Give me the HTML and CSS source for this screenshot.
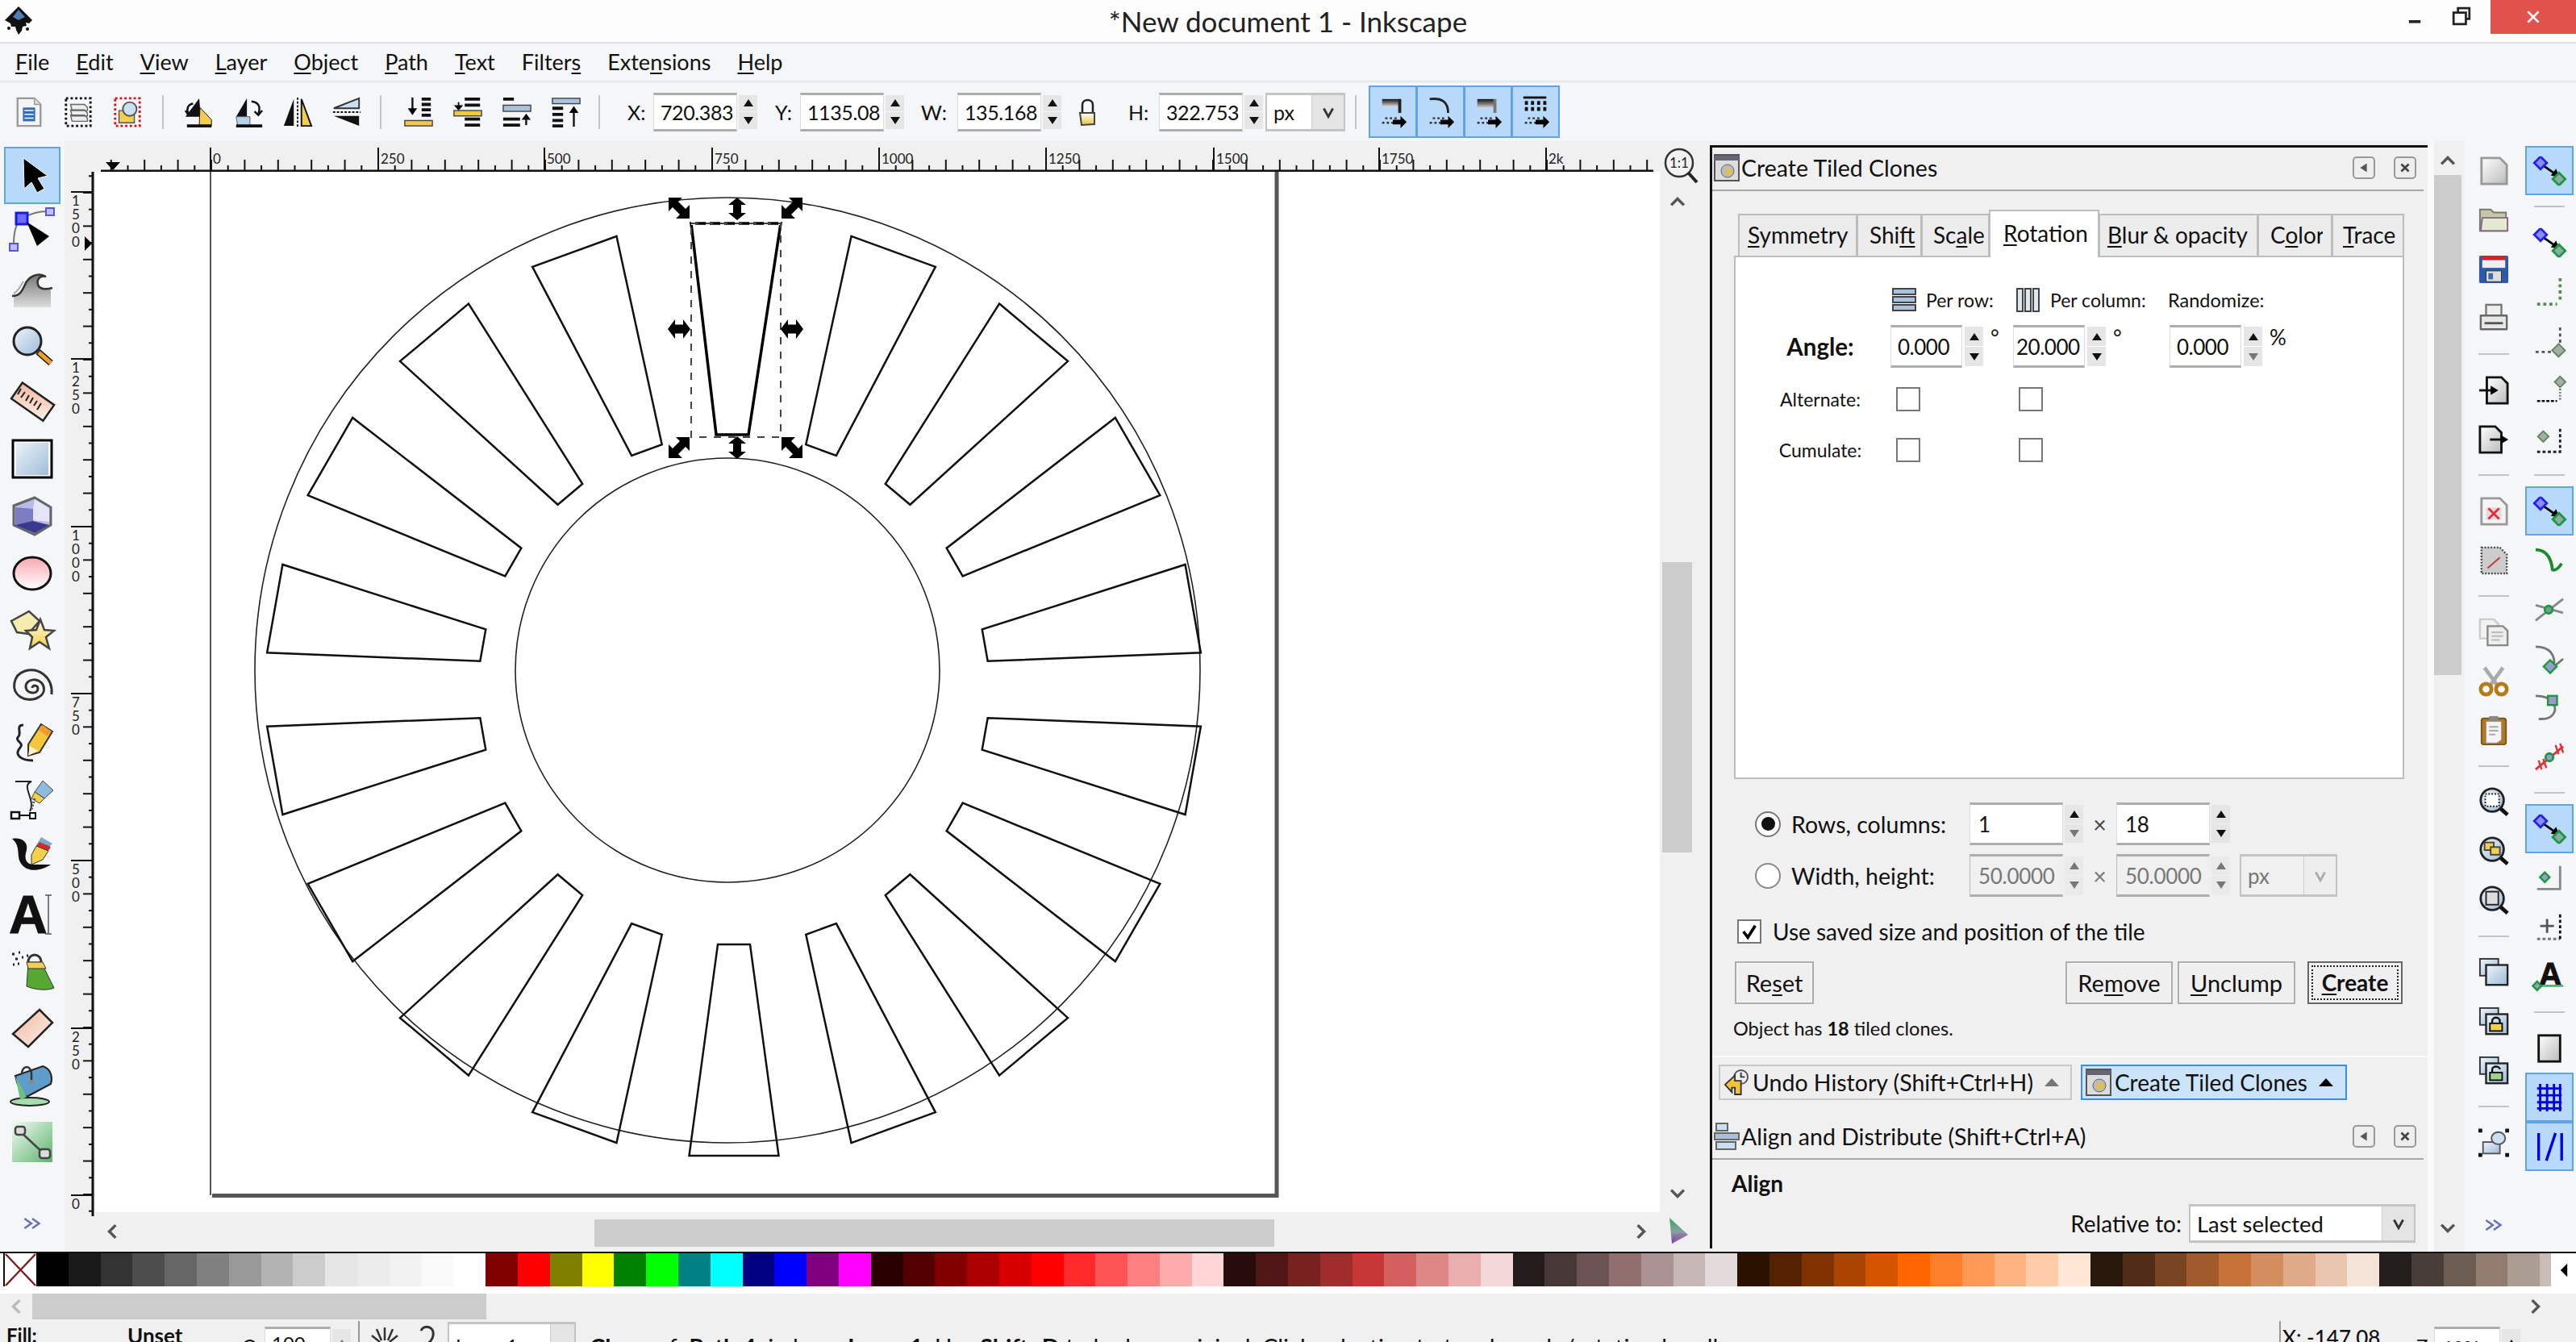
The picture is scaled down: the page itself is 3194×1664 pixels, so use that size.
FILE: index.html
```html
<!DOCTYPE html>
<html lang="en">
<head>
<meta charset="utf-8">
<title>New document 1 - Inkscape</title>
<link rel="stylesheet" href="styles.css">
</head>
<body>
<svg class="defs" aria-hidden="true">
<defs>
<linearGradient id="gBlue" x1="0" y1="0" x2="1" y2="1"><stop offset="0" stop-color="#eef4fa"/><stop offset="1" stop-color="#9dbbd8"/></linearGradient>
<linearGradient id="gPink" x1="0" y1="0" x2="0" y2="1"><stop offset="0" stop-color="#f8a8b0"/><stop offset="1" stop-color="#fff"/></linearGradient>
<linearGradient id="gYel" x1="0" y1="0" x2="0" y2="1"><stop offset="0" stop-color="#fffbd8"/><stop offset="1" stop-color="#f2cf50"/></linearGradient>
<linearGradient id="gPeach" x1="0" y1="0" x2="1" y2="1"><stop offset="0" stop-color="#f0b8a0"/><stop offset="1" stop-color="#fdf0ea"/></linearGradient>
<linearGradient id="gGray" x1="0" y1="0" x2="0" y2="1"><stop offset="0" stop-color="#777"/><stop offset="1" stop-color="#ddd"/></linearGradient>
<linearGradient id="gSheet" x1="0" y1="0" x2="1" y2="1"><stop offset="0" stop-color="#fff"/><stop offset="1" stop-color="#bbb"/></linearGradient>
<linearGradient id="gGreen" x1="0" y1="0" x2="1" y2="1"><stop offset="0" stop-color="#f4fbf4"/><stop offset="1" stop-color="#5cb36c"/></linearGradient>
<linearGradient id="gBar" x1="0" y1="0" x2="0" y2="1"><stop offset="0" stop-color="#111"/><stop offset="1" stop-color="#ddd"/></linearGradient>
<linearGradient id="gCms" x1="0" y1="0" x2="0" y2="1"><stop offset="0" stop-color="#2fa860"/><stop offset=".55" stop-color="#8aa0a0"/><stop offset="1" stop-color="#7030b8"/></linearGradient>
<linearGradient id="gLock" x1="0" y1="0" x2="0" y2="1"><stop offset="0" stop-color="#fff"/><stop offset="1" stop-color="#e8c43c"/></linearGradient>
<symbol id="snapN" viewBox="0 0 48 40"><path d="M12 10 36 27" stroke="#000" stroke-width="3"/><path d="M38 29 26 26 33 17Z"/><rect x="6" y="3" width="12" height="12" transform="rotate(45 12 9)" fill="#8c8cf0" stroke="#2222ee" stroke-width="3"/><rect x="31" y="25" width="12" height="12" transform="rotate(45 37 31)" fill="#8fa8a8" stroke="#179a3c" stroke-width="3"/></symbol>
<symbol id="mag" viewBox="0 0 40 40"><circle cx="18" cy="17" r="15" fill="url(#gBlue)" stroke="#222" stroke-width="3"/><path d="M29 28 38 36" stroke="#111" stroke-width="5"/></symbol>
<symbol id="stack" viewBox="0 0 40 40"><rect x="2" y="2" width="24" height="22" fill="url(#gBlue)" stroke="#333" stroke-width="2"/><rect x="10" y="10" width="28" height="26" fill="url(#gBlue)" stroke="#222" stroke-width="2.5"/></symbol>
<symbol id="snapArrow" viewBox="0 0 40 50"><path d="M10 33H26M6 39H22" stroke="#333" stroke-width="2.5" stroke-dasharray="3 3"/><path d="M20 35H30V30L38 38 30 46V41H20Z"/></symbol>
</defs>
</svg>

<div class="app">
  <header class="titlebar">
    <div class="tb-left">
      <svg class="logo" viewBox="0 0 36 36"><path d="M18 0 35 17 31 21 27 20 28 24 23 25 22 30 18 35 15 29 14 25 9 25 8 21 1 17Z" fill="#111"/><path d="M18 4 26 13 18 17 11 13Z" fill="#4d7fb8"/><circle cx="6" cy="27" r="2" fill="#111"/><circle cx="29" cy="28" r="2" fill="#111"/></svg>
    </div>
    <div class="doc-title">*New document 1 - Inkscape</div>
    <div class="win-ctl">
      <svg class="wc-min" viewBox="0 0 20 20"><path d="M4 14H16" stroke="#222" stroke-width="3"/></svg>
      <svg class="wc-max" viewBox="0 0 22 22"><path d="M7 6V2H20V14H16M2 7H16V20H2Z" fill="none" stroke="#222" stroke-width="2.5"/></svg>
      <div class="wc-close"><svg viewBox="0 0 20 20"><path d="M4 4 16 16M16 4 4 16" stroke="#fff" stroke-width="2.5"/></svg></div>
    </div>
  </header>

  <nav class="menubar">
    <span><u>F</u>ile</span><span><u>E</u>dit</span><span><u>V</u>iew</span><span><u>L</u>ayer</span><span><u>O</u>bject</span><span><u>P</u>ath</span><span><u>T</u>ext</span><span>Filter<u>s</u></span><span>Exte<u>n</u>sions</span><span><u>H</u>elp</span>
  </nav>

  <div class="toolbar">
    <span class="slot"><svg class="ti36" viewBox="0 0 36 40"><path d="M3 2H25L33 10V38H3Z" fill="#f4f4f4" stroke="#999" stroke-width="2.5"/><path d="M25 2V10H33" fill="#ddd" stroke="#999" stroke-width="1.5"/><path d="M10 14H26V32H10Z" fill="#2f6ebd"/><path d="M12 18H24M12 23H24M12 28H24" stroke="#fff" stroke-width="1.6"/></svg></span>
    <span class="slot"><svg class="ti36" viewBox="0 0 36 40"><rect x="2" y="2" width="32" height="36" fill="none" stroke="#111" stroke-width="3" stroke-dasharray="3 3"/><path d="M8 10H26L30 14V18H10ZM8 17H26L30 21V25H10ZM8 24H26L30 28V32H10Z" fill="#eee" stroke="#666" stroke-width="1.5"/></svg></span>
    <span class="slot"><svg class="ti36" viewBox="0 0 36 40"><rect x="2" y="2" width="32" height="36" fill="none" stroke="#d8121f" stroke-width="3" stroke-dasharray="3 3"/><path d="M7 18H27V34H7Z" fill="#f3cf4e" stroke="#555" stroke-width="1.5"/><circle cx="21" cy="16" r="9" fill="#c9dff2" stroke="#555" stroke-width="2"/></svg></span>
    <span class="tsep s28"></span>
    <span class="slot"><svg class="ti36" viewBox="0 0 40 40"><path d="M20 2 22 26 H2Z" fill="#111"/><path d="M21 14 L36 30V38H20Z" fill="#f3cd52" stroke="#111"/><path d="M4 38H36" stroke="#111" stroke-width="4"/><path d="M12 9C5 10 3 16 6 22M2 18 6 24 11 19" fill="none" stroke="#111" stroke-width="2.5"/></svg></span>
    <span class="slot"><svg class="ti36" viewBox="0 0 40 40"><path d="M18 2V26H4Z" fill="#111"/><path d="M4 26H22V38H6Z" fill="#b8d2ea" stroke="#555"/><path d="M4 38H38" stroke="#111" stroke-width="4"/><path d="M24 6C34 7 36 14 33 22M38 18 33 24 28 19" fill="none" stroke="#111" stroke-width="2.5"/></svg></span>
    <span class="slot"><svg class="ti36" viewBox="0 0 40 40"><path d="M15 3V38H2Z" fill="#111"/><path d="M25 3V38H38Z" fill="#f3cd52" stroke="#111" stroke-width="2"/><path d="M20 1V39" stroke="#111" stroke-dasharray="3 2" stroke-width="2"/></svg></span>
    <span class="slot"><svg class="ti36" viewBox="0 0 40 40"><path d="M36 2V15H3Z" fill="#c9dff2" stroke="#333" stroke-width="2"/><path d="M36 25V38L3 25Z" fill="#111"/><path d="M2 20H38" stroke="#111" stroke-dasharray="3 2" stroke-width="2"/></svg></span>
    <span class="tsep s24"></span>
    <span class="slot gapl"><svg class="ti36" viewBox="0 0 40 40"><path d="M12 1V19" stroke="#111" stroke-width="2.5"/><path d="M12 24 6 15H18Z"/><path d="M24 3H36M24 10H36M24 17H36M24 24H36" stroke="#111" stroke-width="4"/><rect x="2" y="31" width="36" height="7" fill="#f1c84c" stroke="#444" stroke-width="1.5"/></svg></span>
    <span class="slot"><svg class="ti36" viewBox="0 0 40 40"><path d="M16 3H36M16 11H36M16 29H36M16 37H36" stroke="#111" stroke-width="4"/><path d="M8 7V15" stroke="#111" stroke-width="2"/><path d="M8 18 2 11H14Z"/><rect x="2" y="18" width="36" height="7" fill="#f1c84c" stroke="#444" stroke-width="1.5"/></svg></span>
    <span class="slot"><svg class="ti36" viewBox="0 0 40 40"><path d="M2 3H16M2 29H24M2 37H24" stroke="#111" stroke-width="4"/><rect x="2" y="11" width="36" height="8" fill="#a9c3de" stroke="#444" stroke-width="1.5"/><path d="M32 22 26 30H38Z"/><path d="M32 28V37" stroke="#111" stroke-width="2.5"/></svg></span>
    <span class="slot"><svg class="ti36" viewBox="0 0 40 40"><rect x="2" y="2" width="36" height="7" fill="#a9c3de" stroke="#444" stroke-width="1.5"/><path d="M2 15H16M2 23H16M2 31H16M2 38H16" stroke="#111" stroke-width="4"/><path d="M30 12 24 21H36Z"/><path d="M30 20V39" stroke="#111" stroke-width="2.5"/></svg></span>
    <span class="tsep s22"></span>
    <span class="lbl lx">X:</span>
    <span class="spin tspin"><span class="entry">720.383</span><span class="updown"><i class="up"></i><i class="dn"></i></span></span>
    <span class="lbl ly">Y:</span>
    <span class="spin tspin"><span class="entry">1135.08</span><span class="updown"><i class="up"></i><i class="dn"></i></span></span>
    <span class="lbl lw">W:</span>
    <span class="spin tspin"><span class="entry">135.168</span><span class="updown"><i class="up"></i><i class="dn"></i></span></span>
    <span class="lockslot"><svg class="lock" viewBox="0 0 26 36"><path d="M7 20V9C7 1 20 1 20 9V18" fill="none" stroke="#222" stroke-width="2.5"/><path d="M4 19H22V33L6 34Z" fill="url(#gLock)" stroke="#444" stroke-width="2"/></svg></span>
    <span class="lbl lh">H:</span>
    <span class="spin tspin"><span class="entry">322.753</span><span class="updown"><i class="up"></i><i class="dn"></i></span></span>
    <span class="combo tcombo"><span class="ctext">px</span><span class="cbtn"><svg viewBox="0 0 16 16"><path d="M3 4 8 13 13 4" fill="none" stroke="#333" stroke-width="2.5"/></svg></span></span>
    <span class="tsep s26"></span>
    <span class="snapgroup">
      <span class="tbtn"><svg viewBox="0 0 40 50"><path d="M6 8H30V18H6Z" fill="url(#gBar)"/><path d="M27 8H31V26H27Z" fill="#222"/><use href="#snapArrow"/></svg></span>
      <span class="tbtn"><svg viewBox="0 0 40 50"><path d="M6 8C22 6 30 12 30 26" fill="none" stroke="#222" stroke-width="3"/><use href="#snapArrow"/></svg></span>
      <span class="tbtn"><svg viewBox="0 0 40 50"><path d="M6 8H30V20H6Z" fill="url(#gBar)"/><path d="M27 8H31V26H27Z" fill="#777"/><use href="#snapArrow"/></svg></span>
      <span class="tbtn"><svg viewBox="0 0 40 50"><path d="M4 6H34" stroke="#111" stroke-width="3"/><path d="M6 13H34M6 21H34" stroke="#111" stroke-width="5" stroke-dasharray="4 4"/><use href="#snapArrow"/></svg></span>
    </span>
  </div>

  <div class="main">
    <aside class="tools">
      <div class="tool on"><svg viewBox="0 0 54 54"><path d="M16 6 46 28 34 31 42 44 33 49 26 36 17 44Z" stroke="#fff"/></svg></div>
      <div class="tool"><svg viewBox="0 0 54 54"><path d="M4 42C4 28 6 16 14 10 24 4 36 1 46 1" fill="none" stroke="#777" stroke-width="2"/><rect x="7" y="3" width="14" height="14" fill="#6c6cff" stroke="#1a1aee" stroke-width="3"/><rect x="44" y="-3" width="10" height="9" fill="#c0c0ff" stroke="#5555ee" stroke-width="2"/><rect x="-1" y="41" width="10" height="9" fill="#c0c0ff" stroke="#5555ee" stroke-width="2"/><path d="M20 14 48 32 33 44Z"/></svg></div>
      <div class="tool"><svg viewBox="0 0 54 54"><path d="M4 50V36C12 36 14 30 18 22 22 12 34 6 44 12 38 10 32 14 34 22 36 28 44 28 50 26V50Z" fill="url(#gGray)"/><path d="M2 36C12 36 14 30 18 22 22 12 34 6 44 12 38 10 32 14 34 22 36 28 44 28 52 26" fill="none" stroke="#333" stroke-width="2.5"/><path d="M4 33C10 30 12 24 16 18" stroke="#aaa" fill="none" stroke-width="2"/></svg></div>
      <div class="tool"><svg viewBox="0 0 54 54"><path d="M34 34 50 48" stroke="#111" stroke-width="8"/><path d="M35 35 50 48" stroke="#f0a020" stroke-width="5"/><circle cx="21" cy="21" r="17" fill="url(#gBlue)" stroke="#222" stroke-width="3"/></svg></div>
      <div class="tool"><svg viewBox="0 0 54 54"><rect x="3" y="14" width="48" height="24" transform="rotate(35 27 27)" fill="url(#gPeach)" stroke="#222" stroke-width="2.5"/><path d="M13 10 9 17M18 14 13 21M23 18 19 25M28 21 24 28M33 25 29 31M38 28 33 36" stroke="#222" stroke-width="2"/></svg></div>
      <div class="tool"><svg viewBox="0 0 54 54"><rect x="5" y="4" width="44" height="44" fill="url(#gBlue)" stroke="#fff" stroke-width="4"/><rect x="3" y="3" width="48" height="46" fill="none" stroke="#000" stroke-width="3"/></svg></div>
      <div class="tool"><svg viewBox="0 0 54 54"><path d="M4 14 30 4 50 16V38L30 50 4 38Z" fill="#b9b9ea" stroke="#666" stroke-width="3"/><path d="M6 16 28 18V34L6 38Z" fill="#7c7cc0"/><path d="M28 18 30 6 48 17V34L28 32Z" fill="#e4e4fb"/><path d="M6 38 28 33 48 38 30 48Z" fill="#38388c"/></svg></div>
      <div class="tool"><svg viewBox="0 0 54 54"><ellipse cx="27" cy="27" rx="23" ry="20" fill="url(#gPink)" stroke="#111" stroke-width="3"/></svg></div>
      <div class="tool"><svg viewBox="0 0 54 54"><path d="M1 16 23 4 36 16 22 32 8 30Z" fill="#f7ecb0" stroke="#444" stroke-width="2.5"/><path d="M37 14 42 27 54 28 44 36 48 50 36 42 24 50 27 36 19 28 32 27Z" fill="url(#gYel)" stroke="#444" stroke-width="2.5"/></svg></div>
      <div class="tool"><svg viewBox="0 0 54 54"><path d="M27 28C27 24 34 24 34 29 34 36 20 36 19 27 18 16 37 14 41 26 45 40 24 47 12 39 0 31 3 12 18 7 34 2 53 14 51 36" fill="none" stroke="#333" stroke-width="3"/></svg></div>
      <div class="tool"><svg viewBox="0 0 54 54"><path d="M16 4C6 4 14 14 10 18 4 24 18 26 12 32 4 40 12 48 28 48" fill="none" stroke="#222" stroke-width="3"/><path d="M38 3 52 12 36 38 22 42 22 28Z" fill="#f4c63c" stroke="#333" stroke-width="2"/><path d="M22 42 24 30 34 36Z" fill="#fff3d0"/><path d="M40 4 51 12 46 18 35 10Z" fill="#ef9a2a"/></svg></div>
      <div class="tool"><svg viewBox="0 0 54 54"><path d="M6 3H26C12 8 32 26 24 40" fill="none" stroke="#222" stroke-width="2"/><rect x="1" y="41" width="10" height="8" fill="#fff" stroke="#111" stroke-width="2.5"/><rect x="24" y="42" width="7" height="7" fill="#fff" stroke="#111" stroke-width="2"/><path d="M11 45H24" stroke="#111" stroke-width="2"/><path d="M40 2 53 14 42 24 30 16Z" fill="#8dbbe0" stroke="#444"/><path d="M30 16 42 24 36 30 26 24Z" fill="#f3cf4e" stroke="#444"/><path d="M30 24 26 38" stroke="#555" stroke-width="3" stroke-dasharray="2 2"/></svg></div>
      <div class="tool"><svg viewBox="0 0 54 54"><path d="M2 4C14 2 22 8 20 18 16 30 20 36 30 36H50C38 44 22 46 14 36 6 26 14 14 2 4Z" fill="#111"/><path d="M38 2 52 10 44 18 32 12Z" fill="#7fa9cc"/><path d="M36 8 50 14 47 19 32 13Z" fill="#d02a2a"/><path d="M32 13 47 19 40 30 26 36 26 24Z" fill="#f3cf4e" stroke="#333"/></svg></div>
      <div class="tool"><svg viewBox="0 0 54 54"><text class="atext" x="-2" y="50">A</text><path d="M47 3V51M43 3H51M43 51H51" stroke="#555" stroke-width="1.5"/></svg></div>
      <div class="tool"><svg viewBox="0 0 54 54"><path d="M22 16C22 4 38 4 38 16" fill="none" stroke="#333" stroke-width="3"/><path d="M22 16H38L54 48C44 52 30 50 20 46Z" fill="#56a833" stroke="#333"/><path d="M20 16H40L44 24H22Z" fill="#f3cf4e" stroke="#333"/><path d="M2 6H5M10 4H12M14 10H16M6 12H9M3 19H5M9 18H11M20 8H22" stroke="#222" stroke-width="3"/></svg></div>
      <div class="tool"><svg viewBox="0 0 54 54"><path d="M36 4 52 20 22 50 3 34Z" fill="url(#gPeach)" stroke="#222" stroke-width="2.5"/></svg></div>
      <div class="tool"><svg viewBox="0 0 54 54"><ellipse cx="24" cy="48" rx="24" ry="5" fill="#a6dcae" stroke="#222" stroke-width="2"/><path d="M6 16 40 4C52 8 52 20 50 26L20 42C12 36 8 26 6 16Z" fill="#5f9cc9" stroke="#222" stroke-width="2"/><path d="M6 16 20 42 12 46Z" fill="#6fc07c"/><path d="M14 14C14 2 26 2 26 14V22" fill="none" stroke="#333" stroke-width="2.5"/><circle cx="26" cy="24" r="3" fill="#888"/></svg></div>
      <div class="tool"><svg viewBox="0 0 54 54"><rect x="2" y="2" width="50" height="50" fill="url(#gGreen)"/><path d="M12 14 42 42" stroke="#444" stroke-width="2.5"/><rect x="6" y="8" width="12" height="10" rx="3" fill="#ddd" stroke="#444" stroke-width="2.5"/><rect x="36" y="36" width="13" height="11" rx="3" fill="#ddd" stroke="#444" stroke-width="2.5"/></svg></div>
      <div class="more"><svg viewBox="0 0 20 14"><path d="M2 2 9 7 2 12M10 2 17 7 10 12" fill="none" stroke="#6a72b4" stroke-width="2.2"/></svg></div>
    </aside>

    <section class="canvas-area">
      <div class="corner"></div>
      <svg class="hruler" viewBox="118 175 1940 38">
        <defs><pattern id="hp" patternUnits="userSpaceOnUse" x="261" y="175" width="41.4" height="38"><path d="M1 23V36M21.7 30V36" stroke="#111" stroke-width="2"/></pattern></defs>
        <rect x="125" y="175" width="1925" height="38" fill="url(#hp)"/>
        <path d="M125 212H2050" stroke="#111" stroke-width="3"/>
        <path d="M261 183V212M469 183V212M675 183V212M883 183V212M1090 183V212M1297 183V212M1505 183V212M1710 183V212M1917 183V212" stroke="#111" stroke-width="2"/>
        <path d="M131 201H149L140 211Z"/>
        <g class="rtext"><text x="264" y="203">0</text><text x="472" y="203">250</text><text x="678" y="203">500</text><text x="886" y="203">750</text><text x="1093" y="203">1000</text><text x="1300" y="203">1250</text><text x="1508" y="203">1500</text><text x="1713" y="203">1750</text><text x="1920" y="203">2k</text></g>
      </svg>
      <div class="hfill"><svg class="one" viewBox="0 0 44 48"><circle cx="20" cy="20" r="17" fill="#f2f2f2" stroke="#333" stroke-width="2.5"/><text class="onetext" x="20" y="26">1:1</text><path d="M31 32 42 44" stroke="#222" stroke-width="4"/></svg></div>
      <svg class="vruler" viewBox="80 213 38 1295">
        <defs><pattern id="vp" patternUnits="userSpaceOnUse" x="80" y="238" width="38" height="41.4"><path d="M23 1H36M30 21.7H36" stroke="#111" stroke-width="2"/></pattern></defs>
        <rect x="80" y="213" width="38" height="1295" fill="url(#vp)"/>
        <path d="M115 213V1508" stroke="#111" stroke-width="3"/>
        <path d="M88 238H115M88 445H115M88 653H115M88 860H115M88 1067H115M88 1275H115M88 1482H115" stroke="#111" stroke-width="2"/>
        <path d="M105 293V311L114 302Z"/>
        <g class="rtext vt">
          <text><tspan x="94" y="255">1</tspan><tspan x="94" y="272">5</tspan><tspan x="94" y="289">0</tspan><tspan x="94" y="306">0</tspan></text>
          <text><tspan x="94" y="462">1</tspan><tspan x="94" y="479">2</tspan><tspan x="94" y="496">5</tspan><tspan x="94" y="513">0</tspan></text>
          <text><tspan x="94" y="670">1</tspan><tspan x="94" y="687">0</tspan><tspan x="94" y="704">0</tspan><tspan x="94" y="721">0</tspan></text>
          <text><tspan x="94" y="877">7</tspan><tspan x="94" y="894">5</tspan><tspan x="94" y="911">0</tspan></text>
          <text><tspan x="94" y="1084">5</tspan><tspan x="94" y="1101">0</tspan><tspan x="94" y="1118">0</tspan></text>
          <text><tspan x="94" y="1292">2</tspan><tspan x="94" y="1309">5</tspan><tspan x="94" y="1326">0</tspan></text>
          <text><tspan x="94" y="1499">0</tspan></text>
        </g>
      </svg>
      <svg class="canvas" viewBox="118 213 1940 1290">
        <defs><polygon id="tile" points="854.5,277 965.5,277 930,539 890,539"/></defs>
        <path d="M261 190V1482" stroke="#555" stroke-width="2" fill="none"/>
        <path d="M1583 190V1482.5H263" stroke="#555" stroke-width="5" fill="none"/>
        <circle cx="902" cy="831" r="586" class="thin"/>
        <circle cx="902" cy="831" r="263" class="thin"/>
        <g class="tiles">
          <use href="#tile" transform="rotate(20 910 855)"/><use href="#tile" transform="rotate(40 910 855)"/><use href="#tile" transform="rotate(60 910 855)"/><use href="#tile" transform="rotate(80 910 855)"/><use href="#tile" transform="rotate(100 910 855)"/><use href="#tile" transform="rotate(120 910 855)"/><use href="#tile" transform="rotate(140 910 855)"/><use href="#tile" transform="rotate(160 910 855)"/><use href="#tile" transform="rotate(180 910 855)"/><use href="#tile" transform="rotate(200 910 855)"/><use href="#tile" transform="rotate(220 910 855)"/><use href="#tile" transform="rotate(240 910 855)"/><use href="#tile" transform="rotate(260 910 855)"/><use href="#tile" transform="rotate(280 910 855)"/><use href="#tile" transform="rotate(300 910 855)"/><use href="#tile" transform="rotate(320 910 855)"/><use href="#tile" transform="rotate(340 910 855)"/>
        </g>
        <polygon class="seltile" points="857,277 968,277 928,539 888,539"/>
        <path class="bbtop" d="M857 277H968"/>
        <rect class="bbox" x="857" y="277" width="111" height="265"/>
        <defs>
          <path id="hNS" d="M0-14 11-5H5V5H11L0 14-11 5H-5V-5H-11Z"/>
          <path id="hDG" d="M-13-13H4L-1-8 8 1 13-4V13H-4L1 8-8-1-13 4Z"/>
        </defs>
        <use href="#hDG" transform="translate(842 258)"/>
        <use href="#hDG" transform="translate(982 258) scale(-1 1)"/>
        <use href="#hDG" transform="translate(842 555) scale(-1 1)"/>
        <use href="#hDG" transform="translate(982 555)"/>
        <use href="#hNS" transform="translate(914 259)"/>
        <use href="#hNS" transform="translate(914 555)"/>
        <use href="#hNS" transform="translate(842 408) rotate(90) scale(1.08 1)"/>
        <use href="#hNS" transform="translate(982 408) rotate(90) scale(1.08 1)"/>
      </svg>
      <div class="vscroll">
        <svg class="chev chev-up" viewBox="0 0 24 16"><path d="M3 13 12 4 21 13" /></svg>
        <div class="vthumb"></div>
        <svg class="chev chev-dn" viewBox="0 0 24 16"><path d="M3 3 12 12 21 3" /></svg>
      </div>
      <div class="hscroll">
        <svg class="chev chev-l" viewBox="0 0 16 24"><path d="M13 3 4 12 13 21"/></svg>
        <div class="hthumb"></div>
        <svg class="chev chev-r" viewBox="0 0 16 24"><path d="M3 3 12 12 3 21"/></svg>
      </div>
      <div class="cornerbr"><svg class="cms" viewBox="0 0 30 34"><path d="M5 1 28 22 8 33Z" fill="url(#gCms)"/><path d="M17 20 28 22 8 33Z" fill="#a070a0" opacity=".6"/></svg></div>
    </section>

    <section class="dock">
      <div class="dhead">
        <svg class="dicon" viewBox="0 0 32 34"><rect x="1" y="1" width="30" height="32" fill="#ddd" stroke="#555" stroke-width="2"/><path d="M1 2H31V8H1Z" fill="#667"/><circle cx="17" cy="21" r="8" fill="#bbb" stroke="#666"/><circle cx="18" cy="22" r="4" fill="#e8c040"/></svg>
        <span class="dtitle">Create Tiled Clones</span>
        <span class="dbtn"><svg viewBox="0 0 22 22"><path d="M15 5V17L6 11Z" fill="#555"/></svg></span>
        <span class="dbtn"><svg viewBox="0 0 22 22"><path d="M6 6 16 16M16 6 6 16" stroke="#444" stroke-width="3"/></svg></span>
      </div>

      <div class="notebook">
        <div class="tabs">
          <div class="tab w1"><span><u>S</u>ymmetry</span></div>
          <div class="tab w2"><span>Shi<u>f</u>t</span></div>
          <div class="tab w3"><span>Sc<u>a</u>le</span></div>
          <div class="tab w4 on"><span><u>R</u>otation</span></div>
          <div class="tab w5"><span><u>B</u>lur &amp; opacity</span></div>
          <div class="tab w6"><span>C<u>o</u>lor</span></div>
          <div class="tab w7"><span><u>T</u>race</span></div>
        </div>
        <div class="page">
          <div class="rotgrid">
            <div></div>
            <div class="hdr h2"><svg class="hic" viewBox="0 0 30 30"><rect x="1" y="1" width="28" height="7" fill="#a9c3de" stroke="#444" stroke-width="2"/><rect x="1" y="11" width="28" height="7" fill="#a9c3de" stroke="#444" stroke-width="2"/><rect x="1" y="21" width="28" height="7" fill="#a9c3de" stroke="#444" stroke-width="2"/></svg><span>Per row:</span></div>
            <div class="hdr h3"><svg class="hic" viewBox="0 0 30 30"><rect x="1" y="1" width="7" height="28" fill="#dde7f0" stroke="#444" stroke-width="2"/><rect x="11" y="1" width="7" height="28" fill="#dde7f0" stroke="#444" stroke-width="2"/><rect x="21" y="1" width="7" height="28" fill="#dde7f0" stroke="#444" stroke-width="2"/></svg><span>Per column:</span></div>
            <div class="hdr h4"><span>Randomize:</span></div>

            <div class="rlabel big"><b>Angle:</b></div>
            <div class="cell"><span class="spin pspin"><span class="entry">0.000</span><span class="updown"><i class="up"></i><i class="dn"></i></span></span><span class="unit">°</span></div>
            <div class="cell tight"><span class="spin pspin"><span class="entry">20.000</span><span class="updown"><i class="up"></i><i class="dn"></i></span></span><span class="unit">°</span></div>
            <div class="cell c4"><span class="spin pspin"><span class="entry">0.000</span><span class="updown"><i class="up"></i><i class="dn off"></i></span></span><span class="unit">%</span></div>

            <div class="rlabel">Alternate:</div>
            <div><span class="cb"></span></div>
            <div><span class="cb"></span></div>
            <div></div>

            <div class="rlabel">Cumulate:</div>
            <div><span class="cb"></span></div>
            <div><span class="cb"></span></div>
            <div></div>
          </div>
        </div>
      </div>

      <div class="sizerow first">
        <span class="radio sel"></span><span class="slabel">Rows, columns:</span>
        <span class="spin sspin"><span class="entry">1</span><span class="updown"><i class="up"></i><i class="dn off"></i></span></span>
        <span class="times">×</span>
        <span class="spin sspin"><span class="entry">18</span><span class="updown"><i class="up"></i><i class="dn"></i></span></span>
      </div>
      <div class="sizerow second dis">
        <span class="radio"></span><span class="slabel">Width, height:</span>
        <span class="spin sspin"><span class="entry">50.0000</span><span class="updown"><i class="up off"></i><i class="dn off"></i></span></span>
        <span class="times">×</span>
        <span class="spin sspin"><span class="entry">50.0000</span><span class="updown"><i class="up off"></i><i class="dn off"></i></span></span>
        <span class="combo scombo"><span class="ctext">px</span><span class="cbtn"><svg viewBox="0 0 16 16"><path d="M3 4 8 13 13 4" fill="none" stroke="#aaa" stroke-width="2.5"/></svg></span></span>
      </div>

      <div class="savedrow"><span class="cb on"><svg viewBox="0 0 24 24"><path d="M4 12 10 20 20 4" fill="none" stroke="#000" stroke-width="4"/></svg></span><span>Use saved size and position of the tile</span></div>

      <div class="btnrow">
        <button class="btn b1">Re<u>s</u>et</button>
        <button class="btn b2">Re<u>m</u>ove</button>
        <button class="btn b3"><u>U</u>nclump</button>
        <button class="btn b4"><span><u>C</u>reate</span></button>
      </div>
      <div class="status-note">Object has <b>18</b> tiled clones.</div>

      <div class="dtabs">
        <div class="dtab d1"><svg class="dti" viewBox="0 0 34 36"><circle cx="23" cy="11" r="9" fill="#eee" stroke="#555" stroke-width="2"/><path d="M23 5V11H28" fill="none" stroke="#333" stroke-width="2"/><path d="M2 21 15 9V16H23V34H15V25H11V31Z" fill="#f1c33c" stroke="#333" stroke-width="2"/></svg><span>Undo History (Shift+Ctrl+H)</span><i class="caret g"></i></div>
        <div class="dtab d2"><svg class="dti" viewBox="0 0 32 34"><rect x="1" y="1" width="30" height="32" fill="#ddd" stroke="#555" stroke-width="2"/><path d="M1 2H31V8H1Z" fill="#667"/><circle cx="17" cy="21" r="8" fill="#bbb" stroke="#666"/><circle cx="18" cy="22" r="4" fill="#e8c040"/></svg><span>Create Tiled Clones</span><i class="caret"></i></div>
      </div>

      <div class="dhead second">
        <svg class="dicon" viewBox="0 0 32 34"><rect x="3" y="1" width="14" height="9" fill="#c9dff2" stroke="#666" stroke-width="2"/><rect x="1" y="13" width="30" height="8" fill="#a9c3de" stroke="#666" stroke-width="2"/><rect x="3" y="24" width="24" height="9" fill="#c9dff2" stroke="#666" stroke-width="2"/></svg>
        <span class="dtitle">Align and Distribute (Shift+Ctrl+A)</span>
        <span class="dbtn"><svg viewBox="0 0 22 22"><path d="M15 5V17L6 11Z" fill="#555"/></svg></span>
        <span class="dbtn"><svg viewBox="0 0 22 22"><path d="M6 6 16 16M16 6 6 16" stroke="#444" stroke-width="3"/></svg></span>
      </div>
      <div class="aligntitle">Align</div>
      <div class="relrow"><span>Relative to:</span><span class="combo rcombo"><span class="ctext">Last selected</span><span class="cbtn"><svg viewBox="0 0 16 16"><path d="M3 4 8 13 13 4" fill="none" stroke="#333" stroke-width="2.5"/></svg></span></span></div>
    </section>

    <div class="dscroll">
      <svg class="chev chev-up u2" viewBox="0 0 24 16"><path d="M3 13 12 4 21 13"/></svg>
      <div class="dthumb"></div>
      <svg class="chev chev-dn d2c" viewBox="0 0 24 16"><path d="M3 3 12 12 21 3"/></svg>
    </div>

    <aside class="cmd">
      <div class="ccol">
        <div class="ci"><svg viewBox="0 0 40 40"><path d="M4 3H28L37 12V37H4Z" fill="url(#gSheet)" stroke="#999" stroke-width="3"/></svg></div>
        <div class="ci"><svg viewBox="0 0 40 40"><path d="M2 6H16L20 10H36V34H2Z" fill="#c4c9a4" stroke="#777" stroke-width="2"/><path d="M5 17H38V34H3Z" fill="#e6e9d2" stroke="#868" stroke-width="2"/></svg></div>
        <div class="ci"><svg viewBox="0 0 40 40"><rect x="1" y="2" width="38" height="36" rx="2" fill="#2c5aa8"/><path d="M5 3H35V8H5Z" fill="#d8202a"/><path d="M5 8H35V18H5Z" fill="#eee"/><rect x="10" y="22" width="20" height="14" fill="#ddd" stroke="#333"/><rect x="13" y="25" width="6" height="8" fill="#3a6aa8"/></svg></div>
        <div class="ci"><svg viewBox="0 0 40 40"><rect x="10" y="2" width="20" height="14" fill="#eee" stroke="#777" stroke-width="2.5"/><path d="M3 16H37V34H3Z" fill="#e8e8e8" stroke="#666" stroke-width="2.5" stroke-linejoin="round"/><path d="M8 26H32" stroke="#555" stroke-width="3"/></svg></div>
        <div class="csep"></div>
        <div class="ci"><svg viewBox="0 0 40 40"><path d="M11 3H30L38 11V37H11Z" fill="url(#gSheet)" stroke="#111" stroke-width="3"/><path d="M1 20H20" stroke="#111" stroke-width="3"/><path d="M16 14 26 20 16 26Z"/></svg></div>
        <div class="ci"><svg viewBox="0 0 40 40"><path d="M2 3H22L30 11V37H2Z" fill="url(#gSheet)" stroke="#111" stroke-width="3"/><path d="M15 20H32" stroke="#111" stroke-width="3"/><path d="M29 14 39 20 29 26Z"/></svg></div>
        <div class="csep"></div>
        <div class="ci"><svg viewBox="0 0 40 40"><path d="M4 3H28L37 12V37H4Z" fill="#f4f4f4" stroke="#999" stroke-width="3"/><rect x="10" y="15" width="20" height="16" fill="#ddd"/><path d="M13 16 27 30M27 16 13 30" stroke="#ee2a3a" stroke-width="3"/></svg></div>
        <div class="ci"><svg viewBox="0 0 40 40"><path d="M4 3H28L37 12V37H4Z" fill="#ccc" stroke="#444" stroke-width="2.5" stroke-dasharray="2 2"/><path d="M12 30 28 16" stroke="#c43a3a" stroke-width="2"/></svg></div>
        <div class="csep"></div>
        <div class="ci"><svg viewBox="0 0 40 40"><path d="M2 3H20L26 9V28H2Z" fill="#f2f2f2" stroke="#ccc" stroke-width="2.5"/><path d="M12 12H32L38 18V37H12Z" fill="#eee" stroke="#888" stroke-width="2.5"/><path d="M17 20H32M17 25H32M17 30H28" stroke="#bbb" stroke-width="2"/></svg></div>
        <div class="ci"><svg viewBox="0 0 40 40"><path d="M8 2 24 24M32 2 16 24" stroke="#aaa" stroke-width="5"/><circle cx="10" cy="30" r="7" fill="#fff" stroke="#b47a1e" stroke-width="5"/><circle cx="30" cy="30" r="7" fill="#fff" stroke="#b47a1e" stroke-width="5"/></svg></div>
        <div class="ci"><svg viewBox="0 0 40 40"><rect x="4" y="4" width="32" height="34" rx="3" fill="#b07a28" stroke="#7a5418" stroke-width="2"/><path d="M10 8H30V32L24 36H10Z" fill="#f4f4f4" stroke="#999"/><rect x="14" y="1" width="12" height="6" fill="#888"/><path d="M14 15H26M14 20H26M14 25H22" stroke="#aaa" stroke-width="2"/></svg></div>
        <div class="csep"></div>
        <div class="ci"><svg viewBox="0 0 40 40"><use href="#mag" width="40" height="40"/><rect x="9" y="9" width="18" height="16" fill="#fff" stroke="#222" stroke-width="2" stroke-dasharray="2 2"/></svg></div>
        <div class="ci"><svg viewBox="0 0 40 40"><use href="#mag" width="40" height="40"/><rect x="8" y="8" width="12" height="10" fill="#f3cf4e" stroke="#444" stroke-width="2"/><rect x="16" y="14" width="12" height="10" fill="#f3cf4e" stroke="#444" stroke-width="2"/></svg></div>
        <div class="ci"><svg viewBox="0 0 40 40"><use href="#mag" width="40" height="40"/><rect x="10" y="8" width="16" height="17" fill="#ddd" stroke="#222" stroke-width="2"/></svg></div>
        <div class="csep"></div>
        <div class="ci"><svg viewBox="0 0 40 40"><use href="#stack" width="40" height="40"/></svg></div>
        <div class="ci"><svg viewBox="0 0 40 40"><use href="#stack" width="40" height="40"/><path d="M18 22V19C18 13 28 13 28 19V22" fill="none" stroke="#111" stroke-width="2.5"/><rect x="15" y="22" width="16" height="10" fill="#f3cf4e" stroke="#111" stroke-width="2"/></svg></div>
        <div class="ci"><svg viewBox="0 0 40 40"><use href="#stack" width="40" height="40"/><path d="M18 22V18C18 13 28 13 28 18" fill="none" stroke="#111" stroke-width="2.5"/><rect x="15" y="22" width="16" height="10" fill="#9fd28c" stroke="#111" stroke-width="2"/></svg></div>
        <div class="csep"></div>
        <div class="ci"><svg viewBox="0 0 40 40"><rect x="6" y="19" width="22" height="15" fill="url(#gBlue)" stroke="#555" stroke-width="2"/><ellipse cx="26" cy="14" rx="9" ry="8" fill="#c9dff2" stroke="#555" stroke-width="2"/><path d="M0 4H5M35 4H40M0 36H5M35 36H40" stroke="#111" stroke-width="5"/></svg></div>
        <div class="more cmore"><svg viewBox="0 0 20 14"><path d="M2 2 9 7 2 12M10 2 17 7 10 12" fill="none" stroke="#6a72b4" stroke-width="2.2"/></svg></div>
      </div>
      <div class="ccol c2">
        <div class="ci on"><svg viewBox="0 0 48 40"><use href="#snapN"/></svg></div>
        <div class="csep"></div>
        <div class="ci"><svg viewBox="0 0 48 40"><use href="#snapN"/></svg></div>
        <div class="ci"><svg viewBox="0 0 40 40"><path d="M4 36H30M34 2V34" stroke="#5a8a5a" stroke-width="4" stroke-dasharray="4 4"/></svg></div>
        <div class="ci"><svg viewBox="0 0 40 40"><path d="M2 34H24M34 2V22" stroke="#555" stroke-width="3" stroke-dasharray="4 4"/><rect x="26" y="26" width="12" height="12" transform="rotate(45 32 32)" fill="#aaa" stroke="#5a8a5a" stroke-width="2"/></svg></div>
        <div class="ci"><svg viewBox="0 0 40 40"><path d="M4 34H30" stroke="#111" stroke-width="2.5" stroke-dasharray="4 2"/><path d="M34 18V34" stroke="#777" stroke-width="3" stroke-dasharray="2 2"/><rect x="29" y="4" width="10" height="10" transform="rotate(45 34 9)" fill="#aaa" stroke="#5a8a5a" stroke-width="2"/></svg></div>
        <div class="ci"><svg viewBox="0 0 40 40"><path d="M4 36H34V4" fill="none" stroke="#222" stroke-width="3" stroke-dasharray="4 3"/><rect x="7" y="11" width="10" height="10" transform="rotate(45 12 16)" fill="#aaa" stroke="#5a8a5a" stroke-width="2"/></svg></div>
        <div class="csep"></div>
        <div class="ci on"><svg viewBox="0 0 48 40"><use href="#snapN"/></svg></div>
        <div class="ci"><svg viewBox="0 0 40 40"><path d="M2 6C14 6 22 14 24 32 28 34 32 30 36 24" fill="none" stroke="#1b8a2e" stroke-width="4"/></svg></div>
        <div class="ci"><svg viewBox="0 0 40 40"><path d="M2 34 38 6M2 14 38 24" stroke="#888" stroke-width="3"/><circle cx="19" cy="20" r="5" fill="#7a9a9a" stroke="#179a3c" stroke-width="3"/></svg></div>
        <div class="ci"><svg viewBox="0 0 40 40"><path d="M2 4C20 4 28 14 26 30M26 30 38 20" fill="none" stroke="#777" stroke-width="3"/><rect x="15" y="24" width="12" height="12" transform="rotate(45 21 30)" fill="#9a9ad0" stroke="#179a3c" stroke-width="2.5"/></svg></div>
        <div class="ci"><svg viewBox="0 0 40 40"><path d="M2 4C12 4 22 6 26 16M26 16C30 24 24 36 6 34" fill="none" stroke="#777" stroke-width="3"/><rect x="18" y="4" width="12" height="12" fill="#9a9ad0" stroke="#179a3c" stroke-width="2.5"/></svg></div>
        <div class="ci"><svg viewBox="0 0 40 40"><path d="M2 36 38 6" stroke="#e0303a" stroke-width="3"/><path d="M6 24 10 36M12 22 16 34M28 4 32 16M34 2 38 14" stroke="#e0303a" stroke-width="2.5"/><circle cx="20" cy="20" r="5" fill="#9a9ad0" stroke="#179a3c" stroke-width="3"/></svg></div>
        <div class="csep"></div>
        <div class="ci on"><svg viewBox="0 0 48 40"><use href="#snapN"/></svg></div>
        <div class="ci"><svg viewBox="0 0 40 40"><path d="M4 34H34V4" fill="none" stroke="#888" stroke-width="3"/><rect x="10" y="14" width="9" height="9" transform="rotate(45 14 18)" fill="#9a9ad0" stroke="#179a3c" stroke-width="2.5"/></svg></div>
        <div class="ci"><svg viewBox="0 0 40 40"><path d="M4 35H34" stroke="#777" stroke-width="3" stroke-dasharray="4 3"/><path d="M34 3V35" stroke="#111" stroke-width="3" stroke-dasharray="4 3"/><path d="M8 18H26M17 9V27" stroke="#555" stroke-width="3"/></svg></div>
        <div class="ci"><svg viewBox="0 0 40 40"><text class="atext small" x="6" y="32">A</text><path d="M2 32H38" stroke="#4fb36a" stroke-width="3"/><rect x="0" y="28" width="8" height="8" transform="rotate(45 4 32)" fill="#9a9ad0" stroke="#179a3c" stroke-width="2.5"/></svg></div>
        <div class="csep"></div>
        <div class="ci"><svg viewBox="0 0 40 40"><rect x="6" y="3" width="28" height="34" fill="url(#gSheet)" stroke="#111" stroke-width="3"/></svg></div>
        <div class="ci on"><svg viewBox="0 0 40 40"><path d="M4 8H36M4 17H36M4 26H36M4 34H36M8 2V38M17 2V38M26 2V38M34 2V38" stroke="#0000e0" stroke-width="3"/></svg></div>
        <div class="ci on"><svg viewBox="0 0 40 40"><path d="M6 2V38M36 2V38M16 38 28 2" stroke="#0000e0" stroke-width="3.5"/></svg></div>
      </div>
    </aside>
  </div>

  <div class="palette">
    <div class="swatches">
    <span class="sw none"><svg viewBox="0 0 41 43" preserveAspectRatio="none"><path d="M1 1 40 42M40 1 1 42" stroke="#7c1c1c" stroke-width="2.5"/></svg></span>
    <span class="sw" style="background:#000"></span><span class="sw" style="background:#1a1a1a"></span><span class="sw" style="background:#333"></span><span class="sw" style="background:#4d4d4d"></span><span class="sw" style="background:#666"></span><span class="sw" style="background:#808080"></span><span class="sw" style="background:#999"></span><span class="sw" style="background:#b3b3b3"></span><span class="sw" style="background:#ccc"></span><span class="sw" style="background:#e6e6e6"></span><span class="sw" style="background:#ececec"></span><span class="sw" style="background:#f2f2f2"></span><span class="sw" style="background:#f9f9f9"></span><span class="sw" style="background:#fff"></span>
    <span class="sw" style="background:#800000"></span><span class="sw" style="background:#f00"></span><span class="sw" style="background:#808000"></span><span class="sw" style="background:#ff0"></span><span class="sw" style="background:#008000"></span><span class="sw" style="background:#0f0"></span><span class="sw" style="background:#008080"></span><span class="sw" style="background:#0ff"></span><span class="sw" style="background:#000080"></span><span class="sw" style="background:#00f"></span><span class="sw" style="background:#800080"></span><span class="sw" style="background:#f0f"></span>
    <span class="sw" style="background:#2b0000"></span><span class="sw" style="background:#500"></span><span class="sw" style="background:#800000"></span><span class="sw" style="background:#a00"></span><span class="sw" style="background:#d40000"></span><span class="sw" style="background:#f00"></span><span class="sw" style="background:#ff2a2a"></span><span class="sw" style="background:#f55"></span><span class="sw" style="background:#ff8080"></span><span class="sw" style="background:#faa"></span><span class="sw" style="background:#ffd5d5"></span>
    <span class="sw" style="background:#280b0b"></span><span class="sw" style="background:#501616"></span><span class="sw" style="background:#782121"></span><span class="sw" style="background:#a02c2c"></span><span class="sw" style="background:#c83737"></span><span class="sw" style="background:#d35f5f"></span><span class="sw" style="background:#de8787"></span><span class="sw" style="background:#e9afaf"></span><span class="sw" style="background:#f4d7d7"></span>
    <span class="sw" style="background:#241c1c"></span><span class="sw" style="background:#483737"></span><span class="sw" style="background:#6c5353"></span><span class="sw" style="background:#916f6f"></span><span class="sw" style="background:#ac9393"></span><span class="sw" style="background:#c8b7b7"></span><span class="sw" style="background:#e3dbdb"></span>
    <span class="sw" style="background:#2b1100"></span><span class="sw" style="background:#520"></span><span class="sw" style="background:#803300"></span><span class="sw" style="background:#a40"></span><span class="sw" style="background:#d45500"></span><span class="sw" style="background:#f60"></span><span class="sw" style="background:#ff7f2a"></span><span class="sw" style="background:#f95"></span><span class="sw" style="background:#ffb380"></span><span class="sw" style="background:#fca"></span><span class="sw" style="background:#ffe6d5"></span>
    <span class="sw" style="background:#28170b"></span><span class="sw" style="background:#502d16"></span><span class="sw" style="background:#784421"></span><span class="sw" style="background:#a05a2c"></span><span class="sw" style="background:#c87137"></span><span class="sw" style="background:#d38d5f"></span><span class="sw" style="background:#deaa87"></span><span class="sw" style="background:#e9c6af"></span><span class="sw" style="background:#f4e3d7"></span>
    <span class="sw" style="background:#241f1c"></span><span class="sw" style="background:#483e37"></span><span class="sw" style="background:#6c5d53"></span><span class="sw" style="background:#917c6f"></span><span class="sw" style="background:#ac9d93"></span><span class="sw" style="background:#c8beb7"></span>
    </div>
    <span class="palarrow"><svg viewBox="0 0 12 22"><path d="M11 1V21L1 11Z"/></svg></span>
  </div>

  <div class="palscroll">
    <svg class="chev chev-l faint" viewBox="0 0 16 24"><path d="M13 3 4 12 13 21"/></svg>
    <div class="pthumb"></div>
    <svg class="chev chev-r p" viewBox="0 0 16 24"><path d="M3 3 12 12 3 21"/></svg>
  </div>

  <footer class="statusbar">
    <div class="fillcol"><span class="fl">Fill:</span><span class="fv">Unset</span></div>
    <span class="olabel">O:</span>
    <span class="spin ospin"><span class="entry">100</span><span class="updown"><i class="up off"></i></span></span>
    <span class="vsep"></span>
    <svg class="sun" viewBox="0 0 36 28"><path d="M18 4V20M8 6 14 20M28 6 22 20M2 14 12 22M34 14 24 22" stroke="#333" stroke-width="2.5"/></svg>
    <svg class="arc" viewBox="0 0 22 28"><path d="M3 8C6 0 20 2 18 14 17 20 12 24 8 26" fill="none" stroke="#333" stroke-width="3"/></svg>
    <span class="combo lcombo"><span class="ctext">Layer 1</span><span class="cbtn"></span></span>
    <span class="msg"><b>Clone</b> of: <b>Path 4</b>; in layer <b>Layer 1</b>. Use <b>Shift+D</b> to look up original. Click selection to toggle scale/rotation handles.</span>
    <span class="vsep"></span>
    <span class="coord">X: -147.08</span>
    <span class="zlabel">Z:</span>
    <span class="spin zspin"><span class="entry">60%</span><span class="updown"><i class="up"></i></span></span>
  </footer>
</div>
</body>
</html>
```
FILE: styles.css
```css
* { box-sizing: border-box; }
html, body { margin: 0; padding: 0; width: 3194px; height: 1664px; overflow: hidden; }
body { background: #f0f0f0; font-family: Lato, "Open Sans", sans-serif; font-size: 27px; color: #111; }
.defs { position: absolute; width: 0; height: 0; }
u { text-decoration-thickness: 2px; text-underline-offset: 3px; }
.app { width: 3194px; height: 1664px; display: flex; flex-direction: column; overflow: hidden; }

/* title */
.titlebar { height: 54px; flex: none; display: grid; grid-template-columns: 1fr auto 1fr; background: #fdfdfd; border-bottom: 2px solid #dedede; }
.tb-left { padding: 8px 0 0 5px; }
.logo { width: 36px; height: 36px; display: block; }
.doc-title { font-size: 35px; line-height: 52px; color: #222; }
.win-ctl { display: flex; justify-content: flex-end; align-items: flex-start; }
.wc-min { width: 24px; height: 24px; margin: 10px 34px 0 0; }
.wc-max { width: 24px; height: 24px; margin: 8px 24px 0 0; }
.wc-close { width: 106px; height: 42px; background: #e2524c; display: flex; align-items: center; justify-content: center; }
.wc-close svg { width: 22px; height: 22px; }

/* menu */
.menubar { height: 48px; flex: none; display: flex; gap: 33px; align-items: center; padding: 0 0 2px 19px; background: #f5f6f7; border-bottom: 2px solid #e6e6e6; }

/* toolbar */
.toolbar { height: 73px; flex: none; display: flex; align-items: center; padding-left: 5px; background: #f5f6f8; }
.slot { width: 61px; display: flex; justify-content: center; flex: none; }
.slot.gapl { margin-left: 4px; }
.ti36 { width: 38px; height: 38px; display: block; }
.tsep { flex: none; height: 42px; display: flex; justify-content: center; }
.tsep::after { content: ""; width: 2px; height: 100%; background: #c4c4c4; }
.s28 { width: 28px; } .s24 { width: 24px; } .s22 { width: 22px; } .s26 { width: 26px; }
.lbl { flex: none; font-size: 25px; }
.lx { width: 32px; margin-left: 24px; }
.ly { width: 53px; padding-left: 22px; }
.lw { width: 66px; padding-left: 21px; }
.lh { width: 57px; padding-left: 19px; }
.lockslot { width: 64px; display: flex; justify-content: center; flex: none; }
.lock { width: 26px; height: 36px; }

.spin { display: inline-flex; flex: none; align-items: stretch; gap: 2px; }
.entry { background: #fff; display: flex; align-items: center; padding-left: 8px; overflow: hidden; white-space: nowrap; border: 1px solid #ddd; border-top: 3px solid #aeaeae; border-bottom: 3px solid #aeaeae; }
.updown { width: 23px; display: flex; flex-direction: column; gap: 1px; margin: 3px 0; }
.updown i { flex: 1; background: #e6e6e6; display: flex; align-items: center; justify-content: center; }
.updown i::after { content: ""; border-left: 6px solid transparent; border-right: 6px solid transparent; }
.updown .up::after { border-bottom: 9px solid #111; }
.updown .dn::after { border-top: 9px solid #111; }
.updown .up.off::after { border-bottom-color: #777; }
.updown .dn.off::after { border-top-color: #777; }
.tspin { height: 48px; font-size: 25px; }
.tspin .entry { width: 104px; padding-left: 8px; letter-spacing: -.4px; }

.combo { display: inline-flex; flex: none; background: #fff; border: 2px solid #c4c4c4; border-top-width: 3px; border-bottom-width: 3px; overflow: hidden; }
.ctext { flex: 1; display: flex; align-items: center; padding-left: 8px; white-space: nowrap; }
.cbtn { width: 40px; background: #e4e4e4; display: flex; align-items: center; justify-content: center; border-left: 1px solid #ccc; }
.cbtn svg { width: 18px; height: 18px; }
.tcombo { width: 99px; height: 48px; margin-left: 3px; font-size: 25px; }

.snapgroup { display: flex; margin-left: 3px; }
.tbtn { width: 60px; height: 65px; background: #b8d9f9; border: 2px solid #5fa4e8; margin-right: -1px; display: flex; align-items: center; justify-content: center; }
.tbtn svg { width: 38px; height: 48px; }

/* main */
.main { height: 1377px; flex: none; display: flex; overflow: hidden; }
.tools { width: 80px; flex: none; background: #f5f6f8; padding: 7px 5px 0; display: flex; flex-direction: column; }
.tool { height: 70.5px; flex: none; width: 70px; display: flex; align-items: center; justify-content: center; border: 2px solid transparent; }
.tool svg { width: 54px; height: 54px; overflow: visible; }
.tool.on { background: #b8d9f9; border-color: #5fa4e8; }
.atext { font-family: "Liberation Sans", sans-serif; font-weight: 700; font-size: 66px; fill: #111; stroke: #111; stroke-width: 1; }
.atext.small { font-size: 42px; }
.more { height: 20px; display: flex; justify-content: center; margin-top: 57px; }
.more svg { width: 24px; height: 18px; }

.canvas-area { width: 2040px; flex: none; display: grid; grid-template-columns: 38px 1940px 62px; grid-template-rows: 38px 1290px 49px; }
.hruler { display: block; width: 1940px; height: 38px; }
.hfill { position: relative; }
.one { position: absolute; left: 4px; top: 7px; width: 44px; height: 48px; }
.onetext { font-family: Lato, sans-serif; font-size: 17px; text-anchor: middle; fill: #222; }
.rtext text { font-family: Lato, sans-serif; font-size: 17px; fill: #222; }
.vt text { text-anchor: middle; }
.vruler { display: block; width: 38px; height: 1295px; grid-row: 2 / span 2; }
.canvas { display: block; width: 1940px; height: 1290px; background: #fff; }
.thin { fill: none; stroke: #222; stroke-width: 1.6; }
.tiles use { fill: none; stroke: #111; stroke-width: 2.5; }
.seltile { fill: none; stroke: #000; stroke-width: 3.5; }
.bbtop { stroke: #fff; stroke-width: 4; stroke-dasharray: 5 13; fill: none; }
.bbox { fill: none; stroke: #444; stroke-width: 2; stroke-dasharray: 9 9; }

.vscroll { display: flex; flex-direction: column; align-items: flex-start; padding-left: 3px; }
.chev { fill: none; stroke: #555; stroke-width: 4; display: block; }
.chev-up, .chev-dn { width: 22px; height: 14px; }
.chev-l, .chev-r { width: 14px; height: 24px; }
.vscroll .chev { margin-left: 8px; }
.vscroll .chev-up { margin-top: 30px; }
.vthumb { width: 37px; height: 360px; margin-top: 440px; background: #ccc; }
.vscroll .chev-dn { margin-top: 416px; }
.hscroll { grid-column: 2; display: flex; align-items: center; padding: 5px 0 2px 14px; }
.hscroll .chev { margin-bottom: 4px; }
.hthumb { width: 843px; height: 34px; margin-left: 591px; background: #ccc; }
.hscroll .chev-r { margin-left: 448px; }
.cornerbr { display: flex; padding: 6px 0 0 7px; }
.cms { width: 30px; height: 34px; }

/* dock */
.dock { width: 890px; flex: none; margin: 5px 0 4px 0; border-left: 3px solid #111; border-top: 3px solid #111; background: #f0f0f0; overflow: hidden; }
.dhead { height: 54px; display: flex; align-items: center; margin-right: 5px; border-bottom: 2px solid #a8a8a8; padding-bottom: 3px; }
.dhead.second { margin-top: 20px; }
.dicon { width: 32px; height: 34px; margin-left: 2px; flex: none; }
.dtitle { flex: 1; padding-left: 2px; font-size: 28.5px; white-space: nowrap; }
.dbtn { width: 28px; height: 28px; margin-right: 23px; background: #eee; border: 2px solid #999; border-radius: 5px; display: flex; align-items: center; justify-content: center; flex: none; }
.dbtn svg { width: 20px; height: 20px; }
.dbtn:last-child { margin-right: 9px; }

.notebook { margin: 23px 0 0 27px; width: 831px; }
.tabs { height: 57px; display: flex; align-items: flex-end; padding-left: 5px; }
.tab { height: 52px; border: 2px solid #bdbdbd; border-bottom: none; background: #ececec; font-size: 28px; display: flex; align-items: center; flex: none; margin-right: -1px; }
.tab span { display: block; overflow: hidden; white-space: nowrap; width: 100%; padding-bottom: 3px; }
.tab.on { height: 59px; margin-bottom: -2px; background: #fff; position: relative; z-index: 1; }
.w1 { width: 148px; padding: 0 3px 0 10px; }
.w2 { width: 81px; padding: 0 3px 0 14px; }
.w3 { width: 85px; padding: 0 5px 0 13px; }
.w4 { width: 137px; padding: 0 3px 0 16px; }
.w5 { width: 198px; padding: 0 3px 0 9px; }
.w6 { width: 93px; padding: 0 10px 0 14px; }
.w7 { width: 90px; padding: 0 3px 0 12px; }
.page { height: 649px; background: #fff; border: 2px solid #bdbdbd; padding-top: 38px; }
.rotgrid { display: grid; grid-template-columns: 192px 152px 194px 200px; grid-template-rows: 46px 77px 63px 30px; align-items: start; }
.hdr { display: flex; align-items: center; height: 30px; font-size: 23px; gap: 12px; white-space: nowrap; }
.h2 { padding-left: 2px; } .h3 { padding-left: 4px; } .h4 { margin-left: -2px; font-size: 23.5px; }
.hic { width: 30px; height: 30px; flex: none; }
.rlabel { padding-left: 18px; text-align: center; font-size: 23px; line-height: 30px; }
.rlabel.big { font-size: 29.5px; line-height: 53px; }
.cell { display: flex; align-items: flex-start; }
.pspin { height: 53px; font-size: 26px; }
.pspin .entry { width: 89px; letter-spacing: -.5px; }
.tight .entry { padding-left: 3px; }
.pspin .updown { margin: 2px 0 2px 1px; }
.unit { padding-left: 9px; font-size: 26px; line-height: 30px; }
.cb { display: block; width: 30px; height: 30px; border: 2px solid #777; background: #fff; margin-left: 7px; }
.sizerow { display: flex; align-items: center; margin-left: 53px; font-size: 28.5px; height: 53px; }
.sizerow.first { margin-top: 29px; }
.sizerow.second { margin-top: 11px; }
.radio { width: 32px; height: 32px; border-radius: 50%; border: 2px solid #777; background: #fff; flex: none; display: flex; align-items: center; justify-content: center; }
.radio.sel::after { content: ""; width: 17px; height: 17px; border-radius: 50%; background: #111; }
.slabel { width: 234px; padding-left: 13px; flex: none; white-space: nowrap; }
.sspin { height: 53px; font-size: 26px; }
.sspin .entry { width: 116px; padding-left: 10px; letter-spacing: -.3px; }
.times { width: 41px; text-align: center; color: #444; flex: none; }
.dis .entry { background: #f0f0f0; color: #777; border-left-color: #bbb; border-right-color: #eee; }
.dis .times { color: #777; }
.dis .updown i { background: #eaeaea; }
.dis .radio { border-color: #888; }
.scombo { width: 121px; height: 53px; margin-left: 12px; background: #f0f0f0; color: #777; font-size: 26px; }
.scombo .cbtn { background: #eee; }
.savedrow { margin: 28px 0 0 31px; display: flex; align-items: center; gap: 14px; font-size: 28px; height: 30px; white-space: nowrap; }
.cb.on { margin: 0; display: flex; align-items: center; justify-content: center; flex: none; }
.cb.on svg { width: 22px; height: 22px; }
.btnrow { margin: 22px 0 0 28px; width: 828px; display: flex; height: 53px; }
.btn { font: inherit; font-size: 29px; color: #111; height: 53px; padding: 0; background: #efefef; border: 2px solid #adadad; box-shadow: inset 0 0 0 1px #f6f6f6; }
.b1 { width: 98px; margin-right: auto; }
.b2 { width: 133px; margin-right: 6px; }
.b3 { width: 146px; margin-right: 15px; }
.b4 { width: 118px; padding: 3px; font-weight: 700; border-color: #666; font-size: 28px; }
.b4 span { display: block; height: 100%; line-height: 39px; border: 2px dotted #222; }
.status-note { height: 66px; padding: 16px 0 0 26px; font-size: 23.5px; border-bottom: 2px solid #fbfbfb; }
.dtabs { display: flex; gap: 11px; margin: 9px 0 0 8px; }
.dtab { height: 44px; display: flex; align-items: center; border: 2px solid #c8c8c8; background: #eee; font-size: 28.5px; white-space: nowrap; flex: none; }
.d1 { width: 438px; }
.d2 { width: 330px; background: #cce4f9; border-color: #3c8fe0; }
.d2 span { font-size: 28px; }
.dti { width: 32px; height: 36px; margin: 0 4px; flex: none; }
.caret { border-left: 9px solid transparent; border-right: 9px solid transparent; border-bottom: 10px solid #000; margin-left: 14px; }
.caret.g { border-bottom-color: #777; }
.aligntitle { font-weight: 700; font-size: 28px; line-height: 40px; margin: 9px 0 0 24px; }
.relrow { margin: 6px 15px 0 0; display: flex; justify-content: flex-end; align-items: center; gap: 9px; font-size: 28px; }
.rcombo { width: 281px; height: 48px; font-size: 27.5px; }

.dscroll { width: 46px; flex: none; background: #f0f0f0; border-left: 8px solid #fafafa; display: flex; flex-direction: column; align-items: flex-start; }
.dscroll .chev { margin-left: 6px; }
.chev-up.u2 { margin-top: 17px; }
.dthumb { width: 34px; height: 620px; margin-top: 11px; background: #ccc; }
.chev-dn.d2c { margin-top: 679px; }

.cmd { width: 138px; flex: none; display: flex; background: #f5f6f8; padding-top: 6px; }
.ccol { width: 72px; flex: none; display: flex; flex-direction: column; align-items: center; }
.ccol.c2 { width: 66px; }
.ci { height: 61px; width: 60px; flex: none; display: flex; align-items: center; justify-content: center; border: 2px solid transparent; }
.ci svg { width: 38px; height: 38px; overflow: visible; }
.c2 .ci svg { width: 44px; height: 38px; }
.ci.on { background: #b8d9f9; border-color: #5fa4e8; }
.csep { height: 28px; flex: none; display: flex; align-items: center; }
.csep::after { content: ""; width: 38px; height: 2px; background: #c4c4c4; }
.cmore { margin-top: 63px; }

/* palette */
.palette { height: 43px; flex: none; display: flex; background: #fff; border-top: 2px solid #111; }
.swatches { width: 3163px; flex: none; display: flex; padding-left: 4px; overflow: hidden; }
.sw { width: 39.8px; flex: none; display: block; }
.sw.none { width: 41px; background: #fff; border-left: 2px solid #111; }
.sw.none svg { display: block; width: 100%; height: 100%; }
.palarrow { flex: 1; display: flex; align-items: center; justify-content: center; background: #fff; }
.palarrow svg { width: 10px; height: 22px; }

.palscroll { height: 41px; flex: none; display: flex; align-items: flex-end; background: #f0f0f0; border-top: 9px solid #fff; }
.palscroll .chev-l { margin: 0 0 4px 13px; }
.chev.faint { stroke: #bbb; }
.pthumb { width: 563px; height: 32px; margin-left: 13px; background: #ccc; }
.chev-r.p { margin: 0 0 4px 2534px; }

.statusbar { height: 28px; flex: none; display: flex; align-items: flex-start; overflow: hidden; font-size: 24px; padding-left: 8px; }
.fillcol { display: flex; width: 260px; flex: none; padding-top: 5px; font-weight: 700; font-size: 26px; line-height: 30px; }
.fl { width: 150px; font-size: 24px; }
.olabel { width: 28px; margin: 18px 0 0 32px; flex: none; }
.ospin { height: 40px; margin-top: 9px; font-size: 24px; }
.ospin .entry { width: 82px; align-items: flex-start; padding-top: 3px; }
.vsep { width: 2px; height: 28px; background: #999; margin: 2px 0 0 9px; flex: none; }
.sun { width: 36px; height: 28px; margin: 6px 0 0 13px; flex: none; }
.arc { width: 22px; height: 28px; margin: 6px 0 0 24px; flex: none; }
.lcombo { width: 159px; height: 40px; margin: 3px 0 0 14px; }
.lcombo .ctext { align-items: flex-start; padding-top: 12px; }
.lcombo .cbtn { width: 30px; }
.msg { width: 1445px; margin: 16px 0 0 17px; flex: none; white-space: nowrap; overflow: hidden; font-size: 29px; }
.statusbar .msg + .vsep { margin-left: 650px; }
.coord { width: 142px; margin: 6px 0 0 2px; flex: none; font-size: 26px; font-weight: 500; }
.zlabel { width: 22px; margin: 18px 0 0 24px; flex: none; }
.zspin { height: 40px; margin-top: 9px; }
.zspin .entry { width: 82px; align-items: flex-start; padding-top: 8px; }
```
